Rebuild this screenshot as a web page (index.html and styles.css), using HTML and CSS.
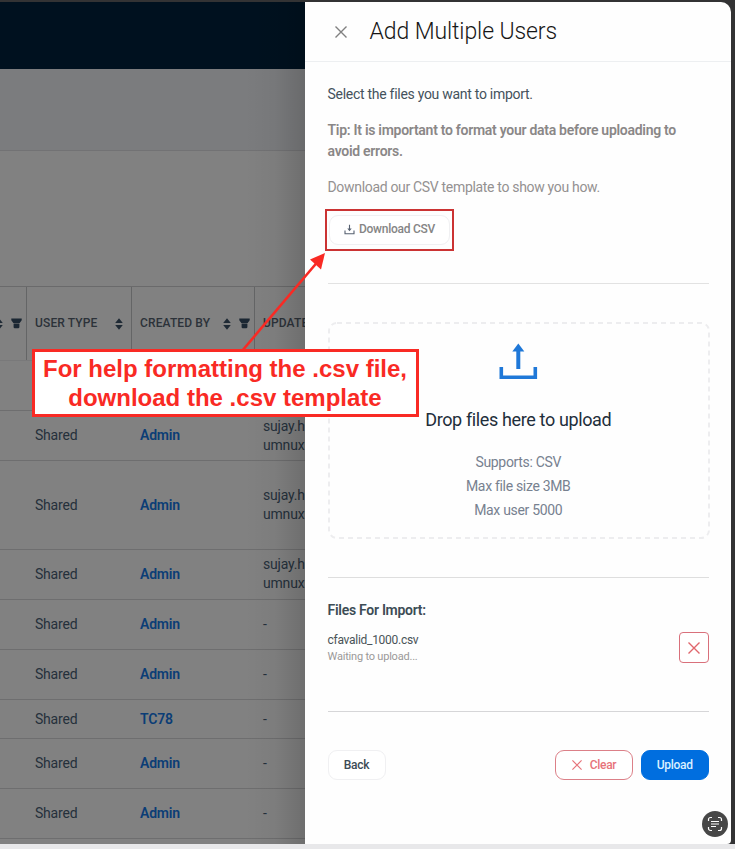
FILE: index.html
```html
<!DOCTYPE html>
<html lang="en">
<head>
<meta charset="utf-8">
<title>Add Multiple Users</title>
<link rel="stylesheet" href="styles.css">
</head>
<body>
<svg class="defs" width="0" height="0">
  <symbol id="sort" viewBox="0 0 8 12"><path d="M4 .2 7.8 4.9H.2zM4 11.8.2 7.1h7.6z" fill="currentColor"/></symbol>
  <symbol id="filter" viewBox="0 0 11 11"><path d="M.3 .5h10.4v1.8L8.700 5H2.300L.3 2.3zM2.600 5.600h5.800V9a1.3 1.3 0 0 1-1.3 1.3H4.1A1.3 1.3 0 0 1 2.600 9z" fill="currentColor"/></symbol>
  <symbol id="cross" viewBox="0 0 12 12"><path d="M.5.5l11 11M11.5.5l-11 11" fill="none" stroke="currentColor" stroke-width="1.4"/></symbol>
</svg>
<div class="window">
  <main class="page">
    <div class="topbar"></div>
    <div class="subbar"></div>
    <div class="toolbar"></div>
    <div class="table">
      <div class="row head">
        <div class="cell first"><svg class="sort"><use href="#sort"/></svg><svg class="filter"><use href="#filter"/></svg></div>
        <div class="cell type"><span>USER TYPE</span><svg class="sort"><use href="#sort"/></svg></div>
        <div class="cell by"><span>CREATED BY</span><svg class="sort"><use href="#sort"/></svg><svg class="filter"><use href="#filter"/></svg></div>
        <div class="cell upd"><span>UPDATED</span></div>
      </div>
      <div class="row blank"></div>
      <div class="row"><div class="cell first"></div><div class="cell type">Shared</div><div class="cell by"><b>Admin</b></div><div class="cell upd">sujay.h<br>umnux</div></div>
      <div class="row tall"><div class="cell first"></div><div class="cell type">Shared</div><div class="cell by"><b>Admin</b></div><div class="cell upd">sujay.h<br>umnux</div></div>
      <div class="row"><div class="cell first"></div><div class="cell type">Shared</div><div class="cell by"><b>Admin</b></div><div class="cell upd">sujay.h<br>umnux</div></div>
      <div class="row"><div class="cell first"></div><div class="cell type">Shared</div><div class="cell by"><b>Admin</b></div><div class="cell upd">-</div></div>
      <div class="row"><div class="cell first"></div><div class="cell type">Shared</div><div class="cell by"><b>Admin</b></div><div class="cell upd">-</div></div>
      <div class="row short"><div class="cell first"></div><div class="cell type">Shared</div><div class="cell by"><b>TC78</b></div><div class="cell upd">-</div></div>
      <div class="row"><div class="cell first"></div><div class="cell type">Shared</div><div class="cell by"><b>Admin</b></div><div class="cell upd">-</div></div>
      <div class="row"><div class="cell first"></div><div class="cell type">Shared</div><div class="cell by"><b>Admin</b></div><div class="cell upd">-</div></div>
    </div>
    <div class="shade"></div>
  </main>
  <aside class="drawer">
    <header class="drawer-head">
      <svg class="close"><use href="#cross"/></svg>
      <h1>Add Multiple Users</h1>
    </header>
    <div class="drawer-body">
      <section class="intro">
        <p class="lead">Select the files you want to import.</p>
        <p class="tip">Tip: It is important to format your data before uploading to<br>avoid errors.</p>
        <p class="hint">Download our CSV template to show you how.</p>
        <div class="highlight">
          <button class="btn download"><svg viewBox="0 0 11 11"><path d="M1 6.500v3.200h9V6.500M5.500 .8v4.200" fill="none" stroke="#566070" stroke-width="1.1"/><path d="M3.300 4.500h4.400L5.500 7.200z" fill="#566070"/></svg><span>Download CSV</span></button>
        </div>
      </section>
      <section class="drop-section">
        <div class="drop">
          <svg class="border"><rect x="1" y="1" width="380" height="215" rx="8"/></svg>
          <svg class="tray" viewBox="0 0 40 38"><path d="M3.300 24V34.200H37.300V24" fill="none" stroke="#1f78d8" stroke-width="3.600"/><path d="M20.300 26V6" stroke="#1f78d8" stroke-width="4"/><path d="M20.300 .5 26.300 8.500h-12z" fill="#1f78d8"/></svg>
          <h2>Drop files here to upload</h2>
          <p>Supports: CSV</p>
          <p>Max file size 3MB</p>
          <p>Max user 5000</p>
        </div>
      </section>
      <section class="files">
        <h3>Files For Import:</h3>
        <div class="file">
          <div><div class="name">cfavalid_1000.csv</div><div class="state">Waiting to upload...</div></div>
          <button class="remove"><svg><use href="#cross"/></svg></button>
        </div>
      </section>
      <footer class="actions">
        <button class="btn back"><span>Back</span></button>
        <button class="btn clear"><svg><use href="#cross"/></svg><span>Clear</span></button>
        <button class="btn upload"><span>Upload</span></button>
      </footer>
    </div>
  </aside>
  <div class="scan"><svg viewBox="0 0 26 26" fill="none" stroke="#fff" stroke-width="1.2"><path d="M6.5 10V8.5a2 2 0 0 1 2-2H10M16 6.5h1.500a2 2 0 0 1 2 2V10M19.500 16v1.500a2 2 0 0 1-2 2H16M10 19.500H8.500a2 2 0 0 1-2-2V16M9 10.500h8M9 13h8M9 15.500h5"/></svg></div>
</div>
<div class="base"></div>
<svg class="arrow" viewBox="0 0 110 110"><path d="M12 105 87 16.500" stroke="#f92a24" stroke-width="2.600"/><path d="M95 7 91 23.500 80 13.500z" fill="#f92a24"/></svg>
<div class="callout"><span class="l1">For help formatting the .csv file,</span><span class="l2">download the .csv template</span></div>
</body>
</html>
```

FILE: styles.css
```css
* { box-sizing: border-box; margin: 0; padding: 0; }
body { position: relative; width: 735px; height: 849px; overflow: hidden; background: #333334; font-family: Roboto, "Liberation Sans", sans-serif; font-size: 14px; letter-spacing: -.28px; }
svg { display: block; flex: none; }
span { white-space: nowrap; }
.defs { position: absolute; }
.window { display: flex; height: 844px; padding: 2px 4px 0 0; }
.base { height: 5px; background: #e8e8ea; }

.page { position: relative; width: 305px; background: #818181; overflow: hidden; flex: none; }
.topbar { height: 67px; background: #00111f; }
.subbar { height: 82px; background: #7b7c7e; border-bottom: 1px solid #727274; }
.toolbar { height: 135px; }
.shade { position: absolute; top: 0; right: 0; bottom: 0; width: 60px; background: linear-gradient(90deg, transparent, rgba(0,0,0,.035) 50%, rgba(0,0,0,.15)); }
.table { width: 340px; border-top: 1px solid #6a6a6b; color: #25303b; }
.row { display: flex; height: 50.300px; border-bottom: 1px solid #6e6e6f; }
.row.tall { height: 88.300px; }
.row.short { height: 38.300px; }
.row.blank { height: 50px; }
.row.head { height: 74px; font-size: 12px; font-weight: 500; color: #2c3239; border-bottom-color: #79797a; }
.cell { display: flex; align-items: center; flex: none; line-height: 18.800px; letter-spacing: -.2px; }
.cell.first { width: 27px; }
.cell.type { width: 105px; padding-left: 8px; }
.cell.by { width: 123px; padding-left: 8px; }
.cell.upd { width: 85px; padding-left: 8px; }
.cell b { font-weight: 600; color: #0b3d76; }
.head .cell { border-right: 1.500px solid #646566; letter-spacing: .13px; }
.head .first { justify-content: flex-end; padding-right: 4px; gap: 8px; }
.head .type, .head .by { justify-content: space-between; padding-right: 8px; }
.head .by { padding-right: 4px; }
.head .by .sort { margin-left: 4px; }
.sort { width: 8px; height: 12px; color: #1f2a35; }
.filter { width: 11px; height: 11px; color: #1b2733; }

.drawer { width: 426px; background: #fefefe; border-radius: 0 10px 4px 0; }
.drawer-head { display: flex; align-items: center; height: 60px; padding-left: 30px; border-bottom: 1px solid #edeff1; }
.close { width: 12px; height: 12px; color: #808080; }
.drawer-head h1 { margin: 1px 0 0 22.500px; font-size: 23px; letter-spacing: -.1px; font-weight: 300; color: #161616; line-height: 28px; white-space: nowrap; }
.drawer-body { padding: 22px 22px 0 22.500px; }
.intro { height: 200px; border-bottom: 1px solid #e2e2e2; }
.intro p { line-height: 21px; white-space: nowrap; }
.lead { color: #44525c; }
.intro .tip { margin-top: 15px; font-weight: 600; color: #8a8787; }
.intro .hint { margin-top: 15px; color: #949191; letter-spacing: -.32px; }
.highlight { display: flex; align-items: center; justify-content: center; width: 129px; height: 42px; margin: 11px 0 0 -2.500px; border: 2px solid #cb3333; }
.btn { display: flex; align-items: center; justify-content: center; height: 30px; border: 1px solid #f0f0f2; border-radius: 9px; background: #fff; font: 500 12px/16px Roboto, sans-serif; letter-spacing: -.26px; }
.download { width: 121px; padding-bottom: 2px; color: #858585; gap: 4px; }
.download svg { width: 11px; height: 11px; }
.drop-section { height: 294px; padding-top: 38px; border-bottom: 1px solid #dedede; }
.drop { position: relative; display: flex; flex-direction: column; align-items: center; height: 217px; padding-top: 21px; }
.drop .border { position: absolute; inset: 0; width: 382px; height: 217px; }
.border rect { fill: none; stroke: #ededef; stroke-width: 2px; stroke-dasharray: 5 4; }
.tray { width: 40px; height: 38px; }
.drop h2 { margin: 27px 0 19px; font-size: 18px; letter-spacing: -.37px; font-weight: 400; line-height: 24px; color: #1f2e3b; }
.drop p { line-height: 23.800px; color: #778190; letter-spacing: -.32px; }
.files { height: 134px; padding-top: 22px; border-bottom: 1px solid #d6d6d8; }
.files h3 { font-size: 14px; font-weight: 600; line-height: 20px; color: #3c4c55; }
.file { display: flex; justify-content: space-between; margin-top: 12px; }
.name { font-size: 12px; line-height: 16px; color: #4a5458; }
.state { font-size: 11px; line-height: 17px; letter-spacing: -.2px; color: #9b9999; }
.remove { display: flex; align-items: center; justify-content: center; width: 30.500px; height: 31px; border: 1px solid #d9707b; border-radius: 4px; background: #fff; color: #e0666c; }
.remove svg { width: 12px; height: 12px; }
.actions { display: flex; padding-top: 38px; }
.actions .back { width: 58px; color: #3b4a54; }
.clear { width: 78px; margin-left: auto; border-color: #dc8088; color: #e7737a; gap: 8px; }
.clear svg { width: 10px; height: 10px; }
.upload { width: 68.500px; margin-left: 7.500px; border-color: #006edf; background: #006edf; color: #d9f0ff; }

.scan { position: absolute; left: 702px; top: 811px; width: 26px; height: 26px; border-radius: 50%; background: #474747; }
.arrow { position: absolute; left: 230px; top: 246px; width: 110px; height: 110px; }
.callout { position: absolute; left: 31.500px; top: 349px; width: 387px; height: 68px; padding-top: 2px; border: 3px solid #f92a24; background: #fff; color: #f92a24; font: bold 24px/29px "Liberation Sans", sans-serif; letter-spacing: 0; display: flex; flex-direction: column; align-items: center; }
```
